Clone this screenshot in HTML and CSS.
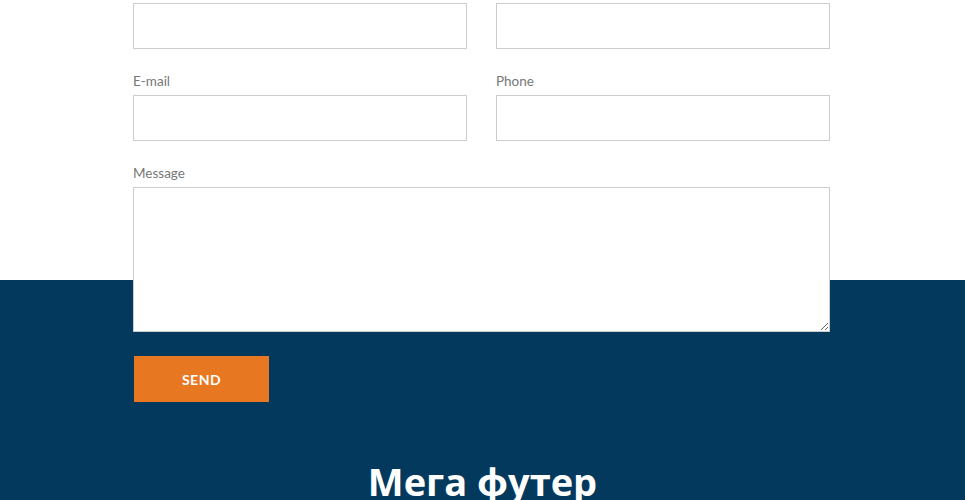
FILE: index.html
```html
<!DOCTYPE html>
<html lang="ru">
<head>
<meta charset="utf-8">
<title>Contact</title>
<link rel="stylesheet" href="styles.css">
</head>
<body>
<div class="page">
  <form class="form">
    <div class="row">
      <div class="field"><input class="input" type="text"></div>
      <div class="field"><input class="input" type="text"></div>
    </div>
    <div class="row">
      <div class="field"><label class="label">E-mail</label><input class="input" type="email"></div>
      <div class="field"><label class="label">Phone</label><input class="input" type="tel"></div>
    </div>
    <div class="field">
      <label class="label">Message</label>
      <textarea class="textarea"></textarea>
    </div>
    <button class="send" type="button">SEND</button>
  </form>
  <h2 class="footer-title">Мега футер</h2>
</div>
</body>
</html>
```
FILE: styles.css
```css
* { box-sizing: border-box; }
html, body { margin: 0; padding: 0; }
body {
  font-family: Lato, "Open Sans", sans-serif;
  background: #03395c;
  overflow: hidden;
}
.page {
  background: linear-gradient(#ffffff 0, #ffffff 280px, #03395c 280px);
  min-height: 500px;
  padding-top: 3px;
}
.form {
  width: 697px;
  margin: 0 auto 0 133px;
  display: flex;
  flex-direction: column;
}
.row {
  display: grid;
  grid-template-columns: 334px 334px;
  column-gap: 29px;
}
.field {
  display: flex;
  flex-direction: column;
  margin-bottom: 21px;
}
.label {
  font-size: 13.5px;
  line-height: 20px;
  padding-top: 1px;
  color: #777;
  margin-bottom: 4px;
}
.input {
  height: 46px;
  border: 1px solid #cccccc;
  background: #fff;
  outline: none;
  margin: 0;
}
.textarea {
  height: 145px;
  border: 1px solid #cccccc;
  background: #fff;
  margin: 0;
  resize: vertical;
  outline: none;
}
.field:last-of-type { margin-bottom: 0; }
.send {
  margin-top: 24px;
  margin-left: 1px;
  width: 135px;
  height: 46px;
  border: none;
  background: #e87722;
  color: #fff;
  font-family: Lato, sans-serif;
  font-weight: 700;
  font-size: 14px;
  letter-spacing: 0.5px;
  cursor: pointer;
}
.footer-title {
  margin: 56px 0 0;
  text-align: center;
  color: #fff;
  font-family: "Open Sans", "Noto Sans", sans-serif;
  font-weight: 700;
  font-size: 38px;
  line-height: 46px;
}
```
